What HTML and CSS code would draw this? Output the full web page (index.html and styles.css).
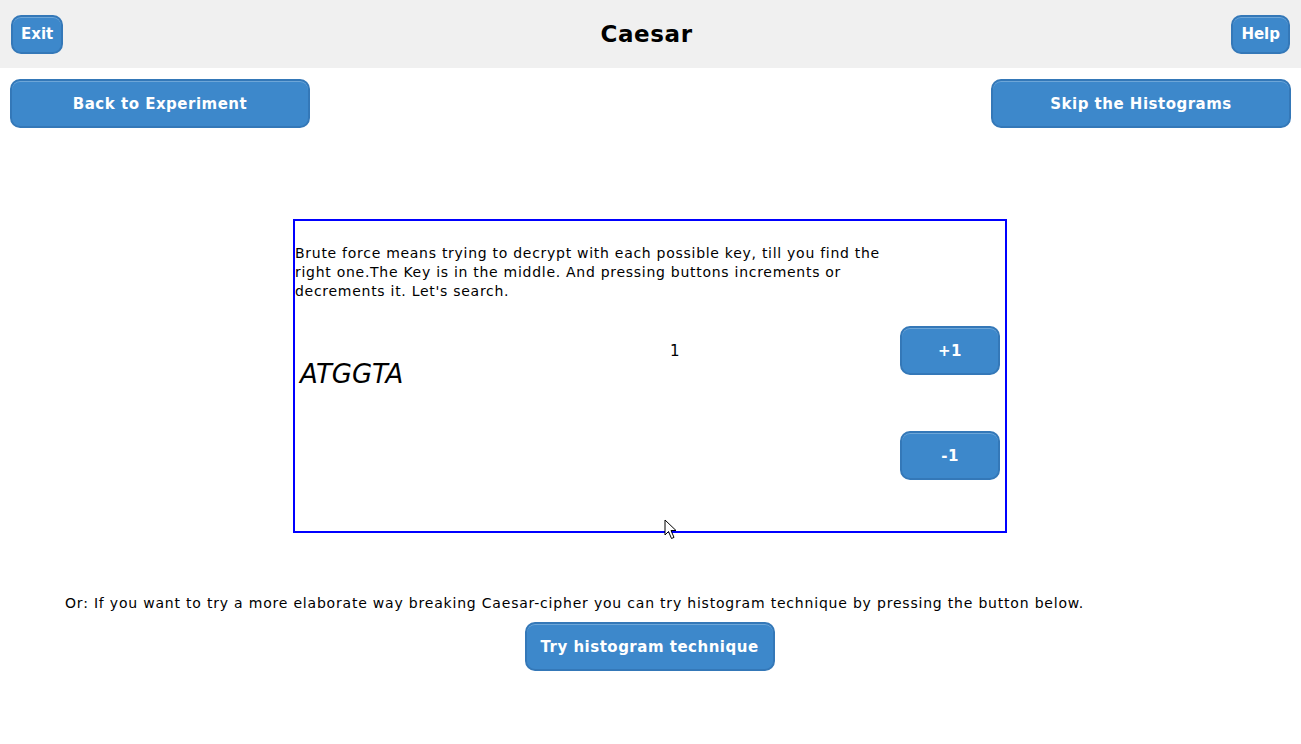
FILE: index.html
```html
<!DOCTYPE html>
<html>
<head>
<meta charset="utf-8">
<title>Caesar</title>
<link rel="stylesheet" href="styles.css">
</head>
<body>
<header class="topbar">
  <button class="btn btn-small">Exit</button>
  <h1 class="title">Caesar</h1>
  <button class="btn btn-small">Help</button>
</header>
<nav class="navrow">
  <button class="btn btn-wide">Back to Experiment</button>
  <button class="btn btn-wide">Skip the Histograms</button>
</nav>
<main class="content">
  <section class="panel">
    <p class="intro">Brute force means trying to decrypt with each possible key, till you find the right one.The Key is in the middle. And pressing buttons increments or decrements it. Let's search.</p>
    <div class="work">
      <div class="cipher">ATGGTA</div>
      <div class="key">1</div>
      <div class="controls">
        <button class="btn btn-key">+1</button>
        <button class="btn btn-key">-1</button>
      </div>
    </div>
    <svg class="cursor" width="14" height="21" viewBox="0 0 14 21"><path d="M1 1 L1 16 L4.5 12.5 L7.5 19.5 L10 18.4 L7 11.5 L12 11.5 Z" fill="#fff" stroke="#000" stroke-width="1" stroke-linejoin="round"/></svg>
  </section>
  <p class="alt">Or: If you want to try a more elaborate way breaking Caesar-cipher you can try histogram technique by pressing the button below.</p>
  <div class="altbtn"><button class="btn btn-hist">Try histogram technique</button></div>
</main>
</body>
</html>
```
FILE: styles.css
```css
html, body {
  margin: 0;
  padding: 0;
  background: #fff;
}
body {
  font-family: "DejaVu Sans", Verdana, sans-serif;
  color: #000;
  width: 1301px;
  height: 744px;
  overflow: hidden;
}
.topbar {
  height: 68px;
  background: #f0f0f0;
  display: flex;
  align-items: center;
  justify-content: space-between;
  padding: 0 11px;
  box-sizing: border-box;
  position: relative;
}
.title {
  margin: 0;
  font-size: 23px;
  font-weight: bold;
  letter-spacing: 0.6px;
  position: absolute;
  left: 0;
  right: 8px;
  text-align: center;
  pointer-events: none;
}
.btn {
  font-family: "DejaVu Sans", Verdana, sans-serif;
  font-weight: bold;
  color: #fff;
  background: #3d88cb;
  border: 2px solid #3478b8;
  border-radius: 10px;
  font-size: 15px;
  letter-spacing: 0.5px;
  padding: 0;
  box-shadow: inset 0 1px 0 rgba(255,255,255,0.25);
  cursor: pointer;
}
.btn-small {
  height: 39px;
  padding: 0 8px;
  letter-spacing: 0;
}
.navrow {
  display: flex;
  justify-content: space-between;
  padding: 11px 10px 0 10px;
}
.btn-wide {
  width: 300px;
  height: 49px;
}
.content {
  display: flex;
  flex-direction: column;
  align-items: flex-start;
}
.panel {
  position: relative;
  margin: 91px 0 0 293px;
  width: 714px;
  height: 314px;
  box-sizing: border-box;
  border: 2px solid #0000ff;
  padding: 23px 0 0 0;
}
.intro {
  margin: 0;
  width: 600px;
  font-size: 14px;
  line-height: 19px;
  letter-spacing: 0.72px;
}
.work {
  display: flex;
  align-items: flex-start;
  margin-top: 25px;
}
.cipher {
  font-style: italic;
  font-size: 26px;
  margin: 33px 0 0 5px;
  width: 370px;
}
.key {
  font-size: 15px;
  margin-top: 16px;
  width: 230px;
}
.controls {
  display: flex;
  flex-direction: column;
  gap: 56px;
  margin-top: 0;
}
.btn-key {
  width: 100px;
  height: 49px;
}
.cursor {
  position: absolute;
  left: 369px;
  top: 298px;
}
.alt {
  margin: 61px 0 0 65px;
  font-size: 14px;
  letter-spacing: 0.8px;
  line-height: 19px;
}
.altbtn {
  align-self: stretch;
  display: flex;
  justify-content: center;
  margin-top: 9px;
  padding-right: 2px;
}
.btn-hist {
  width: 250px;
  height: 49px;
}
```
